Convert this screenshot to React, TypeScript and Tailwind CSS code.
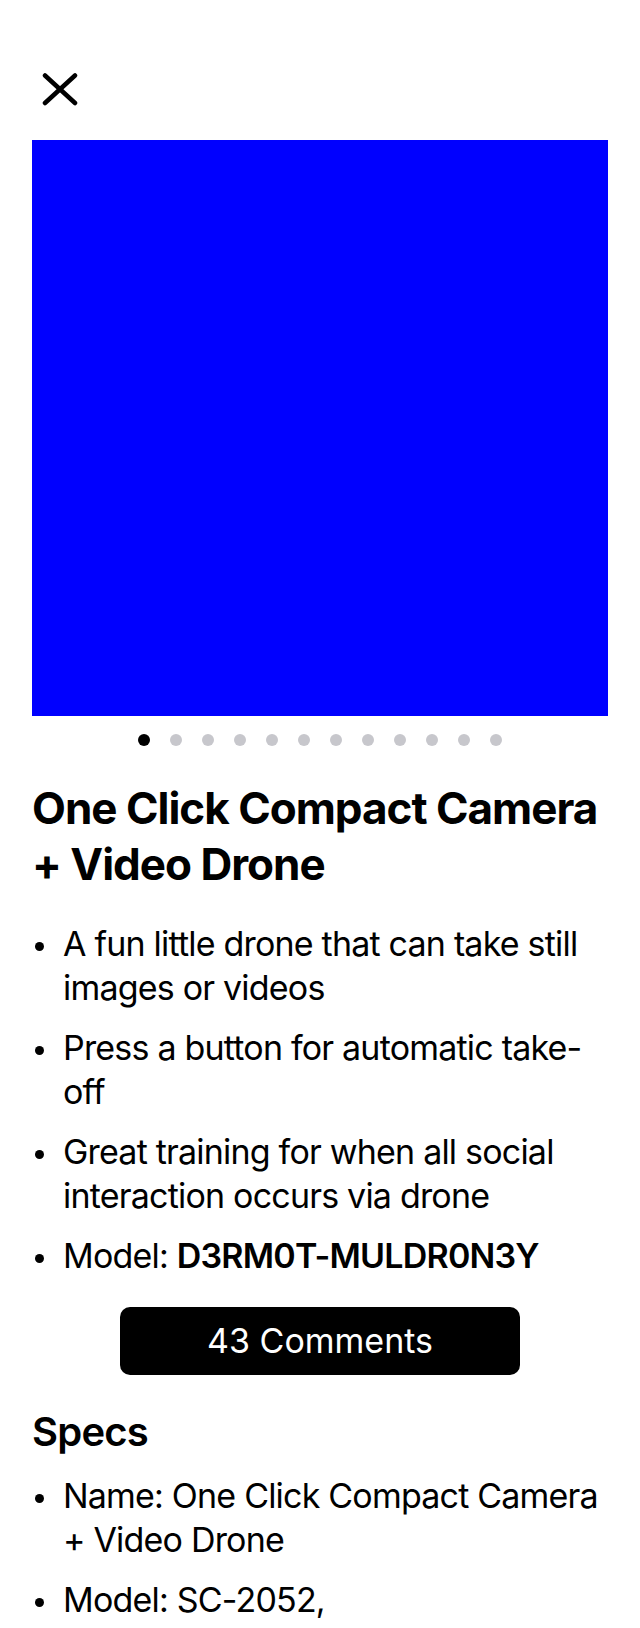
import React from "react";

function Bullet({ children }: { children: React.ReactNode }) {
  return (
    <li className="flex">
      <span className="w-[31px] shrink-0">
        <span className="block ml-[3px] mt-[20px] w-[9px] h-[9px] rounded-full bg-black" />
      </span>
      <span className="flex-1">{children}</span>
    </li>
  );
}

export default function App() {
  const dots = Array.from({ length: 12 }, (_, i) => i);
  return (
    <div className="w-[640px] min-h-[1628px] bg-white text-black font-['Inter',sans-serif]">
      <div className="px-8">
        <div className="h-[140px] pt-[71px]">
          <svg width="36" height="36" viewBox="0 0 36 36" className="ml-[10px]">
            <line x1="3" y1="4.5" x2="33" y2="32" stroke="black" strokeWidth="4.5" strokeLinecap="round" />
            <line x1="33" y1="4.5" x2="3" y2="32" stroke="black" strokeWidth="4.5" strokeLinecap="round" />
          </svg>
        </div>
        <div className="w-full aspect-square bg-[#0000ff]" />
        <div className="flex justify-center gap-5 mt-[18px]">
          {dots.map((i) => (
            <span key={i} className={i === 0 ? "w-3 h-3 rounded-full bg-black" : "w-3 h-3 rounded-full bg-[#c7c7cc]"} />
          ))}
        </div>
        <h1 className="mt-[34px] text-[44px] leading-[56px] font-bold tracking-[-1px]">
          One Click Compact Camera + Video Drone
        </h1>
        <ul className="mt-[30px] text-[34px] leading-[44px] tracking-[-0.8px] flex flex-col gap-4">
          <Bullet>A fun little drone that can take still images or videos</Bullet>
          <Bullet>Press a button for automatic take-off</Bullet>
          <Bullet>Great training for when all social interaction occurs via drone</Bullet>
          <Bullet>
            Model: <span className="font-semibold">D3RM0T-MULDR0N3Y</span>
          </Bullet>
        </ul>
        <div className="flex justify-center mt-[29px]">
          <button className="w-[400px] h-[68px] rounded-[10px] bg-black text-white text-[34px] leading-[44px]">
            43 Comments
          </button>
        </div>
        <h2 className="mt-[32px] text-[40px] leading-[50px] font-semibold tracking-[-0.8px]">Specs</h2>
        <ul className="mt-[17px] text-[34px] leading-[44px] tracking-[-0.8px] flex flex-col gap-4">
          <Bullet>Name: One Click Compact Camera + Video Drone</Bullet>
          <Bullet>Model: SC-2052,</Bullet>
        </ul>
      </div>
    </div>
  );
}
